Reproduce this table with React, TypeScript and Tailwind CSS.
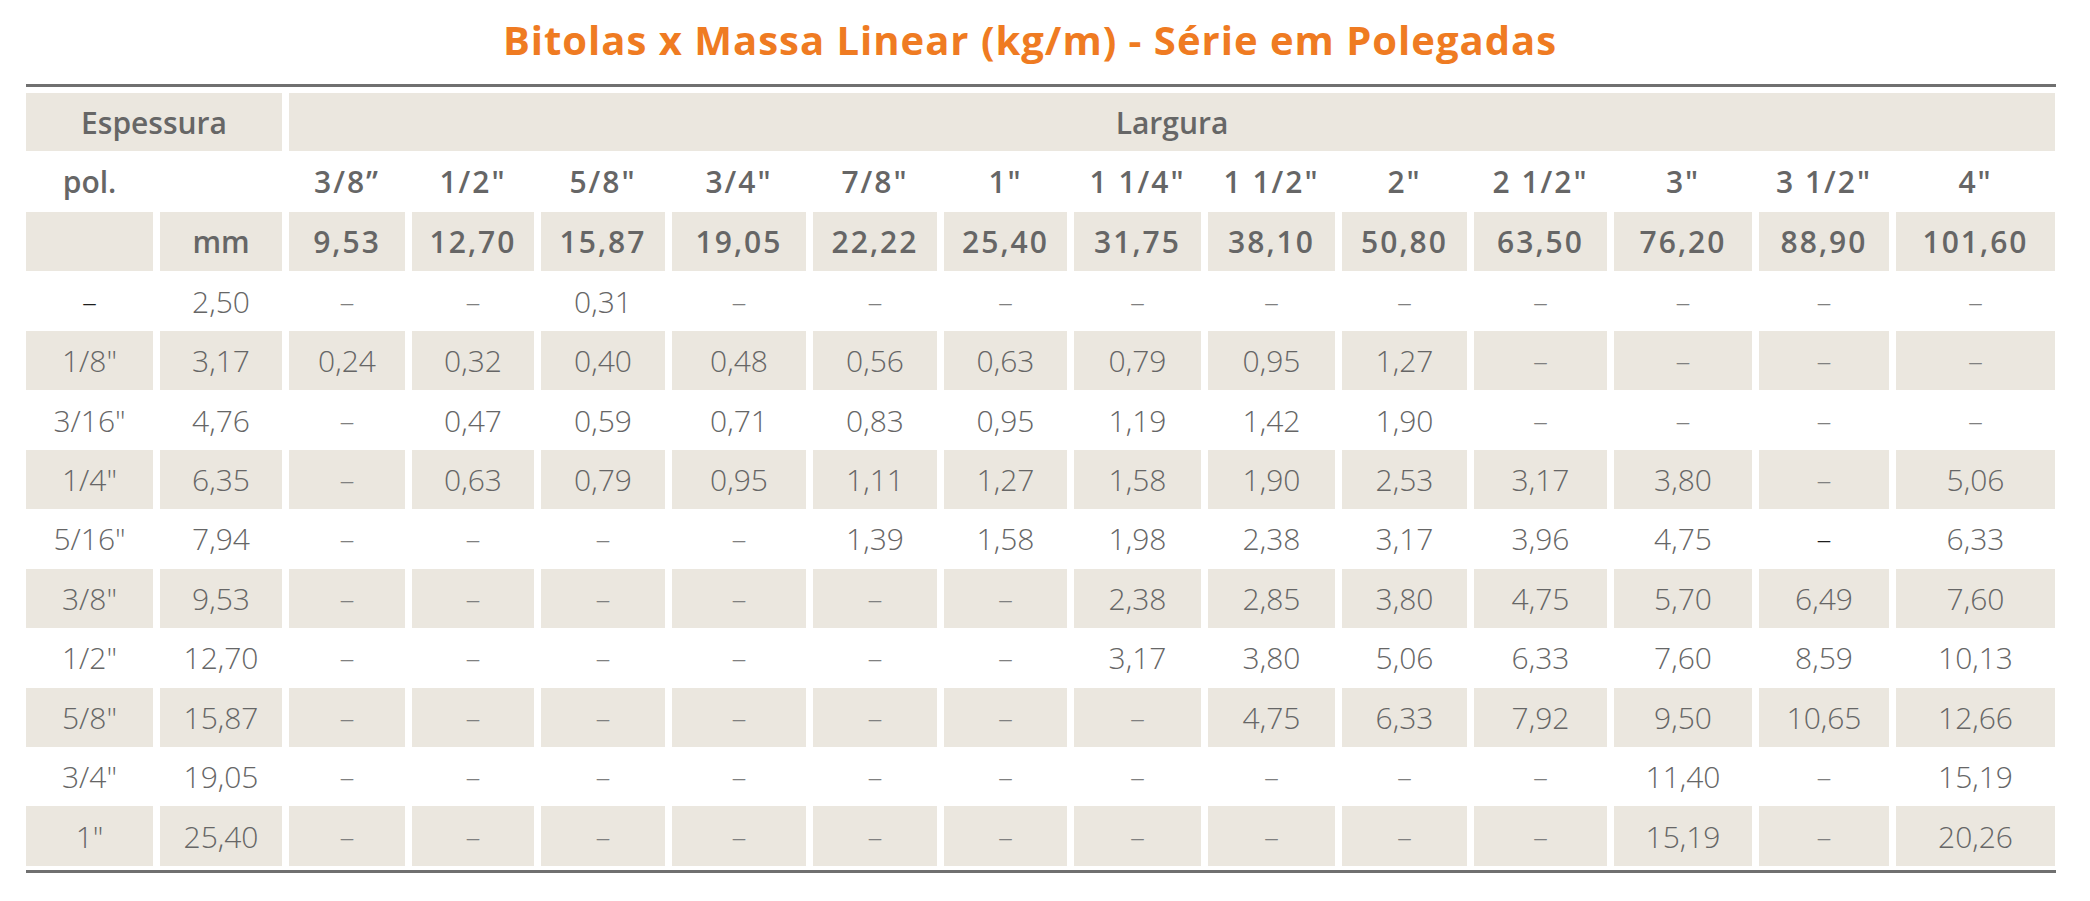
import React from 'react';

const widths = [
  '3/8”', '1/2"', '5/8"', '3/4"', '7/8"', '1"', '1 1/4"', '1 1/2"', '2"', '2 1/2"', '3"', '3 1/2"', '4"',
];
const widthsMm = [
  '9,53', '12,70', '15,87', '19,05', '22,22', '25,40', '31,75', '38,10', '50,80', '63,50', '76,20', '88,90', '101,60',
];

// pol, mm, then one value per largura ("-" = não disponível, "!" = traço escuro)
const rows: string[][] = [
  ['!', '2,50', '-', '-', '0,31', '-', '-', '-', '-', '-', '-', '-', '-', '-', '-'],
  ['1/8"', '3,17', '0,24', '0,32', '0,40', '0,48', '0,56', '0,63', '0,79', '0,95', '1,27', '-', '-', '-', '-'],
  ['3/16"', '4,76', '-', '0,47', '0,59', '0,71', '0,83', '0,95', '1,19', '1,42', '1,90', '-', '-', '-', '-'],
  ['1/4"', '6,35', '-', '0,63', '0,79', '0,95', '1,11', '1,27', '1,58', '1,90', '2,53', '3,17', '3,80', '-', '5,06'],
  ['5/16"', '7,94', '-', '-', '-', '-', '1,39', '1,58', '1,98', '2,38', '3,17', '3,96', '4,75', '!', '6,33'],
  ['3/8"', '9,53', '-', '-', '-', '-', '-', '-', '2,38', '2,85', '3,80', '4,75', '5,70', '6,49', '7,60'],
  ['1/2"', '12,70', '-', '-', '-', '-', '-', '-', '3,17', '3,80', '5,06', '6,33', '7,60', '8,59', '10,13'],
  ['5/8"', '15,87', '-', '-', '-', '-', '-', '-', '-', '4,75', '6,33', '7,92', '9,50', '10,65', '12,66'],
  ['3/4"', '19,05', '-', '-', '-', '-', '-', '-', '-', '-', '-', '-', '11,40', '-', '15,19'],
  ['1"', '25,40', '-', '-', '-', '-', '-', '-', '-', '-', '-', '-', '15,19', '-', '20,26'],
];

const Cell: React.FC<{ shaded?: boolean; className?: string; children?: React.ReactNode }> = ({
  shaded,
  className = '',
  children,
}) => (
  <div className={`flex items-center justify-center ${shaded ? 'bg-[#ebe7df]' : ''} ${className}`}>{children}</div>
);

const Value: React.FC<{ v: string }> = ({ v }) => {
  if (v === '-') return <span className="text-[#808080]">–</span>;
  if (v === '!') return <span className="text-[#1e1e1e]">–</span>;
  return <>{v}</>;
};

const App: React.FC = () => {
  return (
    <div className="min-h-screen bg-white pl-[26px] pt-[16px] font-['Open_Sans','Liberation_Sans',sans-serif] text-[#666666]">
      <div className="w-[2030px]">
        <h1 className="pr-[22px] text-center text-[40px] font-bold leading-[48px] tracking-[1px] text-[#ef7b22]">
          Bitolas x Massa Linear (kg/m) - Série em Polegadas
        </h1>

        <div className="mt-[20px] h-[3px] bg-[#707070]" />

        <div className="mt-[6px] grid grid-cols-[127px_122px_116px_122px_124px_134px_124px_123px_127px_127px_125px_133px_138px_130px_159px] grid-rows-[58px_61px_repeat(11,59.45px)] gap-x-[7px] text-[30px]">
          {/* cabeçalho */}
          <Cell shaded className="col-span-2 font-semibold">Espessura</Cell>
          <Cell shaded className="col-span-13 font-semibold">Largura</Cell>

          <Cell className="font-semibold">pol.</Cell>
          <Cell />
          {widths.map((w) => (
            <Cell key={w} className="font-semibold tracking-[2px]">{w}</Cell>
          ))}

          <Cell shaded />
          <Cell shaded className="font-semibold">mm</Cell>
          {widthsMm.map((w) => (
            <Cell key={w} shaded className="font-semibold tracking-[2px]">{w}</Cell>
          ))}

          {/* valores */}
          {rows.map((r, i) =>
            r.map((v, j) => (
              <Cell key={`${i}-${j}`} shaded={i % 2 === 1} className="font-light">
                <Value v={v} />
              </Cell>
            )),
          )}
        </div>

        <div className="mt-[4px] h-[3px] bg-[#707070]" />
      </div>
    </div>
  );
};

export default App;
